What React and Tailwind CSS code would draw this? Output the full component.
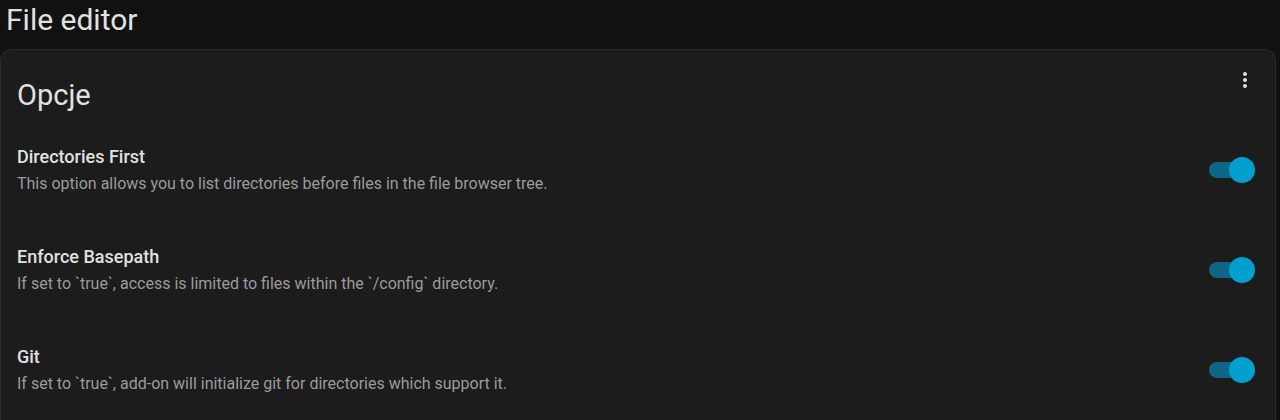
import React from 'react';

const options = [
  {
    title: 'Directories First',
    desc: 'This option allows you to list directories before files in the file browser tree.',
  },
  {
    title: 'Enforce Basepath',
    desc: 'If set to `true`, access is limited to files within the `/config` directory.',
  },
  {
    title: 'Git',
    desc: 'If set to `true`, add-on will initialize git for directories which support it.',
  },
];

const Toggle = () => (
  <div className="relative h-[26px] w-[46px] shrink-0">
    <div className="absolute left-0 top-[5px] h-[16px] w-[34px] rounded-full bg-[#0d6683]" />
    <div className="absolute right-0 top-0 h-[26px] w-[26px] rounded-full bg-[#039fcf]" />
  </div>
);

const App = () => {
  return (
    <div
      className="h-[420px] w-[1280px] overflow-hidden bg-[#111111] text-[#e1e1e1]"
      style={{ fontFamily: 'Roboto, "Liberation Sans", sans-serif' }}
    >
      <h1 className="h-[49px] pl-[6px] pt-[2px] text-[30px] leading-[36px] text-[#e1e1e1]">File editor</h1>
      <div className="mr-[4px] rounded-t-[12px] border border-b-0 border-[#2c2c2c] bg-[#1c1c1c]">
        <div className="flex items-start justify-between pl-[16px] pr-[18px] pt-[27px]">
          <h2 className="text-[29px] leading-[36px]">Opcje</h2>
          <svg viewBox="0 0 24 24" className="-mt-[9px] h-[24px] w-[24px] fill-[#e1e1e1]">
            <path d="M12,16A2,2 0 0,1 14,18A2,2 0 0,1 12,20A2,2 0 0,1 10,18A2,2 0 0,1 12,16M12,10A2,2 0 0,1 14,12A2,2 0 0,1 12,14A2,2 0 0,1 10,12A2,2 0 0,1 12,10M12,4A2,2 0 0,1 14,6A2,2 0 0,1 12,8A2,2 0 0,1 10,6A2,2 0 0,1 12,4Z" />
          </svg>
        </div>
        <div className="pt-[32px]">
          {options.map((o) => (
            <div key={o.title} className="flex h-[100px] items-start justify-between pl-[16px] pr-[20px]">
              <div>
                <div className="text-[18px] font-medium leading-[24px] text-[#e1e1e1]">{o.title}</div>
                <div className="mt-[4px] text-[16px] leading-[22px] text-[#9b9b9b]">{o.desc}</div>
              </div>
              <div className="mt-[12px]">
                <Toggle />
              </div>
            </div>
          ))}
        </div>
      </div>
    </div>
  );
};

export default App;
